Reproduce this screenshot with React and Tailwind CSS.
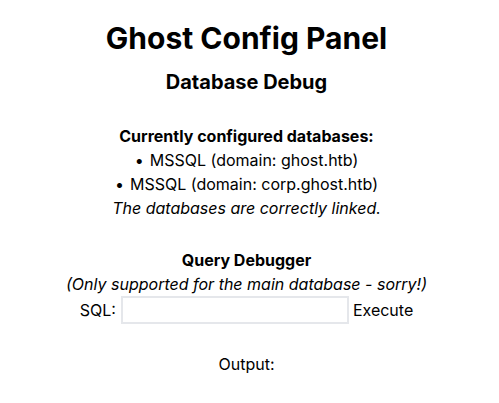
export default function App() {
  return (
    <div className="min-h-screen bg-white text-black text-center pt-5 pr-[6px]" style={{ fontFamily: 'Inter, "Liberation Sans", sans-serif' }}>
      <h1 className="text-3xl font-bold">Ghost Config Panel</h1>
      <h2 className="text-xl font-bold mt-3">Database Debug</h2>
      <div className="mt-7">
        <p className="font-bold">Currently configured databases:</p>
        <ul>
          <li><span className="mr-[6px]">•</span>MSSQL (domain: ghost.htb)</li>
          <li><span className="mr-[6px]">•</span>MSSQL (domain: corp.ghost.htb)</li>
        </ul>
        <p className="italic">The databases are correctly linked.</p>
      </div>
      <div className="mt-7">
        <p className="font-bold">Query Debugger</p>
        <p className="italic">(Only supported for the main database - sorry!)</p>
        <div className="flex items-center justify-center">
          <span className="mr-[5px]">SQL:</span>
          <input type="text" className="w-[228px] h-7 border-2 border-[#e5e7eb] outline-none" />
          <button className="ml-1 p-0">Execute</button>
        </div>
      </div>
      <p className="mt-7">Output:</p>
    </div>
  );
}
